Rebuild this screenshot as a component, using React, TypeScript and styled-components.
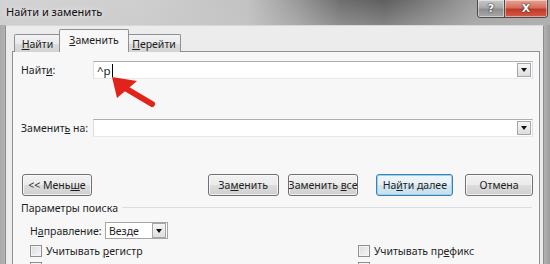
import React from "react";
import styled, { createGlobalStyle, css } from "styled-components";

const Global = createGlobalStyle`
  html, body { margin: 0; padding: 0; }
  body {
    width: 550px; height: 264px; overflow: hidden;
    font-family: "Noto Sans", "Open Sans", sans-serif;
    font-size: 10.5px; color: #1e1e1e;
  }
`;

const Window = styled.div`
  position: relative;
  width: 550px;
  height: 264px;
  overflow: hidden;
  display: flex;
  flex-direction: column;
  background: linear-gradient(90deg, #a9a9a9 0%, #b3b3b3 1%, #bcbcbc 50%, #b0b0b0 99%, #9c9c9c 100%);
`;

const TitleBar = styled.div`
  height: 25px;
  flex: none;
  display: flex;
  align-items: flex-start;
  justify-content: space-between;
  background:
    linear-gradient(180deg, rgba(255,255,255,0) 0%, rgba(200,200,200,0.35) 100%),
    linear-gradient(90deg, #d3d3d3 0%, #cfcfcf 25%, #c2c2c2 45%, #9a9a9a 54%, #6e6e6e 62%, #5f5f5f 70%, #7d7d7d 78%, #9d9d9d 86%, #a6a6a6 100%);
`;

const Title = styled.div`
  margin: 4px 0 0 6px;
  font-size: 11px;
  line-height: 15px;
  color: #111;
  text-shadow: 0 0 6px rgba(255,255,255,0.9);
`;

const CaptionGroup = styled.div`
  display: flex;
  margin-right: 2px;
  height: 17px;
  border: 1px solid #4a4a4a;
  border-top: none;
  border-radius: 0 0 4px 4px;
  overflow: hidden;
`;

const CaptionButton = styled.div<{ $kind: "help" | "close" }>`
  height: 100%;
  display: flex;
  align-items: center;
  justify-content: center;
  color: #fff;
  font-family: "DejaVu Sans", sans-serif;
  font-weight: bold;
  font-size: 11px;
  text-shadow: 0 0 2px #333, 0 0 1px #000;
  box-shadow: inset 0 0 0 1px rgba(255,255,255,0.45);
  ${(p) =>
    p.$kind === "help"
      ? css`
          width: 26px;
          border-right: 1px solid #4a4a4a;
          background: linear-gradient(180deg, #c9c9c9 0%, #a9a9a9 45%, #8e8e8e 55%, #a8a8a8 100%);
        `
      : css`
          width: 42px;
          background: linear-gradient(180deg, #e6a496 0%, #d66f5c 45%, #c2392a 55%, #d65a48 100%);
        `}
`;

const Client = styled.div`
  flex: 1;
  margin: 0 6px 0 5px;
  padding: 4px 3px 0 6px;
  display: flex;
  flex-direction: column;
  background: #ececec;
  border-top: 1px solid #d8d8d8;
  border-left: 1px solid #8c8c8c;
  border-right: 1px solid #8c8c8c;
`;

const TabStrip = styled.div`
  display: flex;
  align-items: flex-end;
  height: 22px;
  padding-left: 2px;
  margin-bottom: -1px;
  position: relative;
  z-index: 1;
`;

const Tab = styled.div<{ $w: number; $active?: boolean }>`
  width: ${(p) => p.$w}px;
  box-sizing: border-box;
  height: 18px;
  display: flex;
  align-items: center;
  justify-content: center;
  border: 1px solid #8e9096;
  border-bottom: none;
  border-radius: 2px 2px 0 0;
  background: linear-gradient(180deg, #f3f3f3 0%, #ebebeb 50%, #dcdcdc 51%, #d4d4d4 100%);
  ${(p) =>
    p.$active &&
    css`
      height: 23px;
      margin: 0 -2px;
      padding-bottom: 3px;
      position: relative;
      z-index: 2;
      background: #f7f7f7;
    `}
`;

const Panel = styled.div`
  flex: 1;
  border: 1px solid #8e9096;
  background: #f7f7f7;
  padding: 9px 6px 0 8px;
  display: flex;
  flex-direction: column;
`;

const FieldRow = styled.div<{ $top?: number }>`
  display: grid;
  grid-template-columns: 72px 1fr;
  align-items: center;
  margin-top: ${(p) => p.$top ?? 0}px;
`;

const Label = styled.span`
  white-space: nowrap;
`;

const Combo = styled.div`
  height: 18px;
  box-sizing: border-box;
  border: 1px solid #abadb3;
  border-left-color: #dbdfe6;
  border-right-color: #dbdfe6;
  border-bottom-color: #e3e9ef;
  background: #fff;
  display: flex;
  align-items: center;
  padding-left: 3px;
  font-size: 11.5px;
`;

const Caret = styled.span`
  display: inline-block;
  width: 1px;
  height: 13px;
  background: #000;
  margin-left: 1px;
`;

const DropButton = styled.div<{ $h?: number }>`
  margin-left: auto;
  width: 14px;
  height: ${(p) => p.$h ?? 14}px;
  box-sizing: border-box;
  border: 1px solid #a6a6a6;
  background: linear-gradient(180deg, #f6f6f6, #dedede);
  display: flex;
  align-items: center;
  justify-content: center;
  margin-right: 1px;
  &::after {
    content: "";
    border-left: 3px solid transparent;
    border-right: 3px solid transparent;
    border-top: 4px solid #111;
  }
`;

const ButtonRow = styled.div`
  display: flex;
  margin-top: 37px;
  padding-left: 1px;
`;

const Button = styled.div<{ $w: number; $gap?: number; $default?: boolean }>`
  width: ${(p) => p.$w}px;
  margin-left: ${(p) => p.$gap ?? 0}px;
  height: 22px;
  box-sizing: border-box;
  border: 1px solid #707070;
  border-radius: 3px;
  background: linear-gradient(180deg, #f2f2f2 0%, #ebebeb 50%, #dddddd 51%, #cfcfcf 100%);
  box-shadow: inset 0 0 0 1px rgba(255,255,255,0.7);
  display: flex;
  align-items: center;
  justify-content: center;
  white-space: nowrap;
  ${(p) =>
    p.$default &&
    css`
      border-color: #3c7fb1;
      box-shadow: inset 0 0 0 1px #9ad3ef;
      background: linear-gradient(180deg, #eef6fb 0%, #e4eff6 50%, #d3e6f1 51%, #c7dfee 100%);
    `}
`;

const GroupHeader = styled.div`
  display: flex;
  align-items: center;
  gap: 4px;
  margin-top: 4px;
  height: 15px;
  &::after {
    content: "";
    flex: 1;
    height: 1px;
    background: #d5dfe5;
    margin-right: 1px;
  }
`;

const DirRow = styled.div`
  display: grid;
  grid-template-columns: 75px 63px;
  align-items: center;
  margin: 7px 0 0 9px;
`;

const Select = styled.div`
  height: 17px;
  box-sizing: border-box;
  border: 1px solid #a5a5a5;
  background: #fff;
  display: flex;
  align-items: center;
  padding-left: 3px;
`;

const Options = styled.div`
  display: grid;
  grid-template-columns: 328px 1fr;
  row-gap: 5px;
  margin: 6px 0 0 9px;
`;

const Check = styled.label`
  display: flex;
  align-items: center;
  gap: 4px;
  height: 12px;
  white-space: nowrap;
`;

const Box = styled.span`
  width: 12px;
  height: 12px;
  box-sizing: border-box;
  border: 1px solid #8f8f8f;
  background: linear-gradient(135deg, #dcdcdc, #f7f7f7);
  box-shadow: inset 0 0 0 1px #f4f4f4;
  flex: none;
`;

const Arrow = styled.svg`
  position: absolute;
  left: 0;
  top: 0;
  pointer-events: none;
`;

const U = styled.span`
  text-decoration: underline;
  text-underline-offset: 1px;
`;

export default function App() {
  return (
    <>
      <Global />
      <Window>
        <TitleBar>
          <Title>Найти и заменить</Title>
          <CaptionGroup>
            <CaptionButton $kind="help">?</CaptionButton>
            <CaptionButton $kind="close">X</CaptionButton>
          </CaptionGroup>
        </TitleBar>
        <Client>
          <TabStrip>
            <Tab $w={47}><span><U>Н</U>айти</span></Tab>
            <Tab $w={70} $active><span><U>З</U>аменить</span></Tab>
            <Tab $w={54}><span><U>П</U>ерейти</span></Tab>
          </TabStrip>
          <Panel>
            <FieldRow>
              <Label>Найт<U>и</U>:</Label>
              <Combo>
                <span>^p</span><Caret />
                <DropButton />
              </Combo>
            </FieldRow>
            <FieldRow $top={40}>
              <Label>Заменит<U>ь</U> на:</Label>
              <Combo>
                <DropButton />
              </Combo>
            </FieldRow>
            <ButtonRow>
              <Button $w={70}><span>&lt;&lt; Мень<U>ш</U>е</span></Button>
              <Button $w={71} $gap={116}><span>За<U>м</U>енить</span></Button>
              <Button $w={71} $gap={9}><span>Заменить <U>в</U>се</span></Button>
              <Button $w={77} $gap={18} $default><span>На<U>й</U>ти далее</span></Button>
              <Button $w={68} $gap={12}><span>Отмена</span></Button>
            </ButtonRow>
            <GroupHeader><span>Параметры поиска</span></GroupHeader>
            <DirRow>
              <Label>Н<U>а</U>правление:</Label>
              <Select>
                <span>Везде</span>
                <DropButton $h={15} />
              </Select>
            </DirRow>
            <Options>
              <Check><Box /><span>Учитывать <U>р</U>егистр</span></Check>
              <Check><Box /><span>Учитывать пр<U>е</U>фикс</span></Check>
              <Check><Box /><span>Только <U>с</U>лово целиком</span></Check>
              <Check><Box /><span>Учитывать су<U>ф</U>фикс</span></Check>
            </Options>
          </Panel>
        </Client>
        <Arrow width="550" height="264" viewBox="0 0 550 264">
          <polygon points="112,77 137,81 117,98" fill="#e2231a" />
          <line x1="125" y1="88" x2="152" y2="104" stroke="#e2231a" strokeWidth="6" strokeLinecap="round" />
        </Arrow>
      </Window>
    </>
  );
}
